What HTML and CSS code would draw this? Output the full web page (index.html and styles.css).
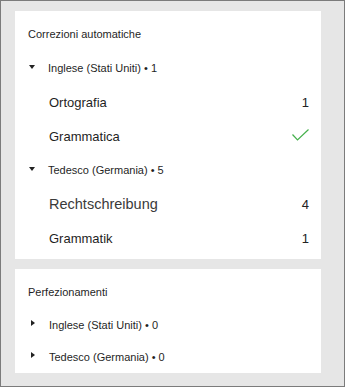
FILE: index.html
```html
<!DOCTYPE html>
<html>
    <head>
        <title>Correzioni</title>
        <meta charset="UTF-8">
        <meta name="viewport" content="width=device-width, initial-scale=1.0">
        <link rel="stylesheet" href="styles.css">
    </head>
    <body>
        <div class="pane">
            <div class="card">
                <div class="heading">Correzioni automatiche</div>
                <div class="group"><span class="caret down"></span>Inglese (Stati Uniti) • 1</div>
                <div class="item"><span>Ortografia</span><span class="count">1</span></div>
                <div class="item"><span>Grammatica</span>
                    <svg class="check" width="17" height="12" viewBox="0 0 17 12"><path d="M0.5 5.5 L5.5 11 L16.5 0.5" fill="none" stroke="#45b04c" stroke-width="1.2"/></svg>
                </div>
                <div class="group"><span class="caret down"></span>Tedesco (Germania) • 5</div>
                <div class="item big"><span>Rechtschreibung</span><span class="count">4</span></div>
                <div class="item"><span>Grammatik</span><span class="count">1</span></div>
            </div>
            <div class="card short">
                <div class="heading">Perfezionamenti</div>
                <div class="group slim"><span class="caret right"></span>Inglese (Stati Uniti) • 0</div>
                <div class="group slim"><span class="caret right"></span>Tedesco (Germania) • 0</div>
            </div>
        </div>
    </body>
</html>
```

FILE: styles.css
```css
html, body {
    margin: 0;
    padding: 0;
}
body {
    font-family: "Liberation Sans", Arial, sans-serif;
    color: #1f1f1f;
}
.pane {
    width: 345px;
    height: 387px;
    border: 1px solid #7b7b7b;
    background-color: #e6e6e6;
    padding: 10px 0 0 14px;
    box-sizing: border-box;
    display: flex;
    flex-direction: column;
    gap: 10px;
}
.card {
    width: 306px;
    background-color: #fff;
    padding: 6px 12px 4px 13px;
    box-sizing: border-box;
}
.card.short {
    padding-bottom: 0;
}
.heading {
    height: 34px;
    display: flex;
    align-items: center;
    font-size: 11px;
}
.group {
    height: 34px;
    display: flex;
    align-items: center;
    font-size: 11px;
    padding-left: 1px;
}
.group.slim {
    height: 32px;
}
.caret {
    width: 0;
    height: 0;
    margin-right: 13px;
}
.caret.down {
    border-left: 3.5px solid transparent;
    border-right: 3.5px solid transparent;
    border-top: 4px solid #222;
    margin-top: -2px;
}
.caret.right {
    border-top: 3.5px solid transparent;
    border-bottom: 3.5px solid transparent;
    border-left: 4px solid #222;
    margin-left: 2px;
    margin-right: 14px;
    margin-top: -4px;
}
.item {
    height: 34px;
    display: flex;
    align-items: center;
    justify-content: space-between;
    padding-left: 21px;
    font-size: 13px;
}
.item.big {
    font-size: 14.5px;
    color: #3a3a3a;
}
.count {
    font-size: 13px;
    color: #222;
}
.check {
    margin-top: -3px;
}
```
